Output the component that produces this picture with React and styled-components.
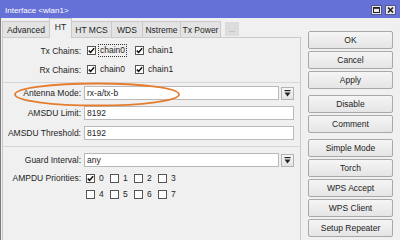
import React from "react";
import styled, { createGlobalStyle } from "styled-components";

const Global = createGlobalStyle`
  html, body { margin: 0; padding: 0; background: #f0f0f0; }
  body { font-family: "Liberation Sans", Arial, sans-serif; }
  * { box-sizing: border-box; }
`;

const Window = styled.div`
  width: 400px;
  height: 240px;
  overflow: hidden;
  background: #f0f0f0;
  display: flex;
  flex-direction: column;
  position: relative;
  color: #1e1e1e;
  font-size: 8.5px;
`;

const TitleBar = styled.div`
  height: 18px;
  flex: none;
  background: #6571d6;
  display: flex;
  align-items: center;
  justify-content: space-between;
  padding: 2px 4px 0 5px;
  color: #fff;
  font-size: 8px;
`;

const Controls = styled.div`
  display: flex;
  gap: 3px;
`;

const CtrlBtn = styled.div`
  width: 11px;
  height: 10px;
  background: #e9e9ee;
  border: 1px solid #50568a;
  display: flex;
  align-items: center;
  justify-content: center;
`;

const Main = styled.div`
  flex: 1;
  display: flex;
  min-height: 0;
  border-left: 1px solid #7c7c7c;
`;

const LeftPane = styled.div`
  width: 300px;
  padding-left: 1px;
  display: flex;
  flex-direction: column;
`;

const TabBar = styled.div`
  height: 19px;
  flex: none;
  display: flex;
  align-items: flex-end;
`;

const Tab = styled.div`
  width: ${(p) => p.$w}px;
  height: ${(p) => (p.$active ? "20px" : "16px")};
  margin-bottom: ${(p) => (p.$active ? "-1px" : "0")};
  padding-bottom: ${(p) => (p.$active ? "3px" : "0")};
  padding-top: ${(p) => (p.$active ? "0" : "1px")};
  background: ${(p) => (p.$active ? "#f0f0f0" : "#e3e3e3")};
  border: 1px solid #c9c9c9;
  border-bottom: none;
  margin-left: -1px;
  display: flex;
  align-items: center;
  justify-content: center;
  white-space: nowrap;
  position: relative;
  z-index: ${(p) => (p.$active ? 1 : 0)};
  font-size: 8.5px;
  &:first-child { margin-left: 0; }
`;

const MoreTab = styled.div`
  height: 14px;
  width: 14px;
  margin: 0 0 1px 4px;
  background: #dcdcdc;
  color: #888;
  display: flex;
  align-items: center;
  justify-content: center;
  font-size: 7px;
`;

const Panel = styled.div`
  flex: 1;
  border: 1px solid #cacaca;
  border-bottom: none;
  padding: 3px 6px 0 0;
  display: flex;
  flex-direction: column;
`;

const Row = styled.div`
  display: grid;
  grid-template-columns: 78px 1fr;
  column-gap: 3px;
  align-items: center;
  height: ${(p) => p.$h || 20}px;
`;

const Label = styled.div`
  text-align: right;
  white-space: nowrap;
`;

const Separator = styled.div`
  height: 1px;
  background: #d6d6d6;
  margin: ${(p) => p.$m || "3px 0 0"};
  margin-right: -6px;
`;

const Checks = styled.div`
  display: flex;
  align-items: center;
  gap: 8px;
  padding-left: 3px;
`;

const CheckItem = styled.div`
  display: flex;
  align-items: center;
  gap: 2px;
`;

const Box = styled.div`
  width: 9px;
  height: 9px;
  border: 1px solid #555;
  background: #fff;
  display: flex;
  align-items: center;
  justify-content: center;
`;

const ItemText = styled.span`
  padding: 0 1px;
  line-height: 11px;
  border: 1px dotted ${(p) => (p.$focus ? "#333" : "transparent")};
`;

const FieldWrap = styled.div`
  display: flex;
  align-items: center;
  gap: 2px;
`;

const Field = styled.div`
  flex: 1;
  height: 14px;
  background: #fff;
  border: 1px solid #b9b9b9;
  padding: 0 2px;
  display: flex;
  align-items: center;
  white-space: nowrap;
`;

const DropBtn = styled.div`
  width: 13px;
  height: 13px;
  border: 1px solid #b3b3b3;
  background: linear-gradient(#f6f6f6, #e4e4e4);
  display: flex;
  align-items: center;
  justify-content: center;
`;

const PrioGrid = styled.div`
  display: grid;
  grid-template-columns: repeat(4, 24px);
  padding-left: 2px;
`;

const ButtonColumn = styled.div`
  width: 85px;
  margin-left: 7px;
  padding-top: 13px;
  display: flex;
  flex-direction: column;
  gap: 2px;
`;

const Button = styled.div`
  height: 18px;
  flex: none;
  border: 1px solid #a8a8a8;
  border-radius: 2px;
  background: linear-gradient(#f5f5f5, #e5e5e5);
  display: flex;
  align-items: center;
  justify-content: center;
  font-size: 8.5px;
  color: #222;
  margin-top: ${(p) => (p.$group ? "4px" : "0")};
`;

const Annotation = styled.svg`
  position: absolute;
  left: 0;
  top: 0;
  pointer-events: none;
`;

const Check = () => (
  <svg width="7" height="7" viewBox="0 0 7 7">
    <path d="M0.8 3.6 L2.6 5.4 L6.2 1.2" fill="none" stroke="#111" strokeWidth="1.5" />
  </svg>
);

const CheckBox = ({ checked }) => <Box>{checked ? <Check /> : null}</Box>;

const DropIcon = () => (
  <svg width="7" height="7" viewBox="0 0 7 7">
    <rect x="0.5" y="0" width="6" height="1.2" fill="#222" />
    <path d="M0.5 2.5 H6.5 L3.5 6.5 Z" fill="#222" />
  </svg>
);

const Dropdown = ({ value }) => (
  <FieldWrap>
    <Field>{value}</Field>
    <DropBtn>
      <DropIcon />
    </DropBtn>
  </FieldWrap>
);

const tabs = [
  ["Advanced", 48],
  ["HT", 23],
  ["HT MCS", 41],
  ["WDS", 32],
  ["Nstreme", 39],
  ["Tx Power", 41],
];
const buttons = [
  ["OK"],
  ["Cancel"],
  ["Apply"],
  ["Disable", true],
  ["Comment"],
  ["Simple Mode", true],
  ["Torch"],
  ["WPS Accept"],
  ["WPS Client"],
  ["Setup Repeater"],
];

export default function App() {
  return (
    <>
      <Global />
      <Window>
        <TitleBar>
          <span>Interface &lt;wlan1&gt;</span>
          <Controls>
            <CtrlBtn>
              <svg width="7" height="6" viewBox="0 0 7 6">
                <rect x="0.5" y="0.5" width="6" height="5" fill="none" stroke="#222" strokeWidth="1" />
                <rect x="0.5" y="0.5" width="6" height="1.3" fill="#222" />
              </svg>
            </CtrlBtn>
            <CtrlBtn>
              <svg width="7" height="6" viewBox="0 0 7 6">
                <path d="M1 0.5 L6 5.5 M6 0.5 L1 5.5" stroke="#222" strokeWidth="1.6" />
              </svg>
            </CtrlBtn>
          </Controls>
        </TitleBar>
        <Main>
          <LeftPane>
            <TabBar>
              {tabs.map(([t, w]) => (
                <Tab key={t} $w={w} $active={t === "HT"}>
                  {t}
                </Tab>
              ))}
              <MoreTab>...</MoreTab>
            </TabBar>
            <Panel>
              <Row $h={19}>
                <Label>Tx Chains:</Label>
                <Checks>
                  <CheckItem>
                    <CheckBox checked />
                    <ItemText $focus>chain0</ItemText>
                  </CheckItem>
                  <CheckItem>
                    <CheckBox checked />
                    <ItemText>chain1</ItemText>
                  </CheckItem>
                </Checks>
              </Row>
              <Row $h={19}>
                <Label>Rx Chains:</Label>
                <Checks>
                  <CheckItem>
                    <CheckBox checked />
                    <ItemText>chain0</ItemText>
                  </CheckItem>
                  <CheckItem>
                    <CheckBox checked />
                    <ItemText>chain1</ItemText>
                  </CheckItem>
                </Checks>
              </Row>
              <Separator />
              <Row>
                <Label>Antenna Mode:</Label>
                <Dropdown value="rx-a/tx-b" />
              </Row>
              <Row>
                <Label>AMSDU Limit:</Label>
                <Field>8192</Field>
              </Row>
              <Row>
                <Label>AMSDU Threshold:</Label>
                <Field>8192</Field>
              </Row>
              <Separator $m="3px 0 3px" />
              <Row>
                <Label>Guard Interval:</Label>
                <Dropdown value="any" />
              </Row>
              <Row $h={16}>
                <Label>AMPDU Priorities:</Label>
                <PrioGrid>
                  {[0, 1, 2, 3].map((n) => (
                    <CheckItem key={n}>
                      <CheckBox checked={n === 0} />
                      <ItemText>{n}</ItemText>
                    </CheckItem>
                  ))}
                </PrioGrid>
              </Row>
              <Row $h={16}>
                <span />
                <PrioGrid>
                  {[4, 5, 6, 7].map((n) => (
                    <CheckItem key={n}>
                      <CheckBox />
                      <ItemText>{n}</ItemText>
                    </CheckItem>
                  ))}
                </PrioGrid>
              </Row>
            </Panel>
          </LeftPane>
          <ButtonColumn>
            {buttons.map(([b, g]) => (
              <Button key={b} $group={g}>
                {b}
              </Button>
            ))}
          </ButtonColumn>
        </Main>
        <Annotation width="400" height="240">
          <ellipse cx="97" cy="94.5" rx="82" ry="11" fill="none" stroke="#e57d2f" strokeWidth="1.8" />
        </Annotation>
      </Window>
    </>
  );
}
